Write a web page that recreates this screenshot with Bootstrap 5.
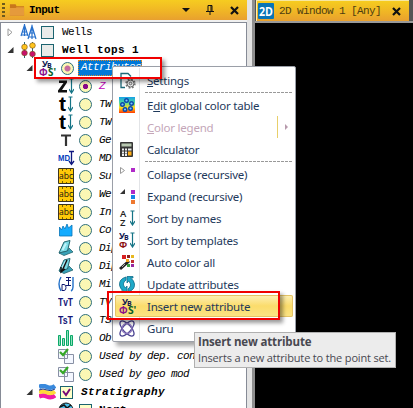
<!DOCTYPE html>
<html lang="en">
<head>
<meta charset="utf-8">
<title>Input</title>
<link rel="stylesheet" href="https://cdn.jsdelivr.net/npm/bootstrap@5.3.0/dist/css/bootstrap.min.css">
<style>
body{width:413px;height:408px;overflow:hidden;background:#f0f0f0;font:12px "Open Sans","Noto Sans",sans-serif}
svg{display:block;flex:none}
.mono{font-family:"Liberation Mono",monospace;font-size:11px;letter-spacing:-.6px;white-space:pre;color:#000}
.mono.fw-bold{letter-spacing:.4px}
.mono.pane-name{letter-spacing:-.5px}
.mono.tab-name{color:#4d3d10;padding-left:1px}
.gold{background:linear-gradient(#f6cc20,#efb326 60%,#e8a02f)}
.left-pane{width:247px}
.pane-title{height:20px;padding-left:2px}
.grip{width:3px;height:15px;background:repeating-linear-gradient(#6d5a1c 0 2px,transparent 2px 4px)}
.tree{margin-top:2px;height:386px;background:#fff;border:1px solid #868b96;border-bottom:0;overflow:hidden}
.tree-row{height:18px}
.lvl-0{padding-left:6px}.lvl-1{padding-left:25px}.lvl-2{padding-left:57px}
.lvl-2 .mono{padding-left:3px}
.exp{width:7px;margin-right:6px}
.chk{width:13px;height:13px;border:1px solid #1c6470;background:#e9ebe9;flex:none}
.chk.on{background:#ffffc8}
.rad{width:13px;height:13px;border:1.300px solid #2e6f7c;border-radius:50%;background:#fbf7b4;flex:none}
.rad.on{background:radial-gradient(circle,#8a0a8a 0 2.300px,#fbf7b4 3px)}
.rad.part{background:radial-gradient(circle,#c56b9d 0 2.500px,#fbf7b4 3.500px)}
.tree .magenta{color:#c000b8}
.tree .sel{background:#0078d7;color:#fff;height:16px;line-height:15px;width:64px;padding-left:3px;outline:1px dotted #d98b28;outline-offset:-1px}
.splitter{width:5px;background:#e4e4e4}
.right-pane{background:#000;border-left:3px solid #8f8f8f;min-width:0}
.tab-strip{height:21px;background:#555;padding-left:1px}
.doc-tab{width:153px;height:21px;border-left:1px solid #fff0b0;border-top:1px solid #f7e7a0}
.tab-edge{height:2px;background:#999}
.ctx{left:112px;top:66px;width:184px;height:276px;background:#fff;border:1px solid #9b9fa8;border-radius:2px;padding:2px 2px 0 2px;box-shadow:4px 4px 4px rgba(0,0,0,.35);color:#1e395b}
.ctx-rule{left:26px;top:1px;bottom:1px;width:1px;background:#e2e4e7}
.ctx-item{height:22px;padding-left:4px;position:relative;font-family:"Noto Sans","Open Sans",sans-serif;font-size:11.500px;letter-spacing:-.220px;white-space:nowrap}
.ctx-item svg{margin-right:11px}
.ctx-sep{height:3px;margin-left:30px;background:repeating-linear-gradient(90deg,#999 0 3px,transparent 3px 4px) 0 1px/100% 1px no-repeat}
.ctx .muted{color:#c4a6b8}
.hot{background:linear-gradient(#fdf0b8,#fbdc6b 50%,#fbe486);box-shadow:inset 0 0 0 1px #e5c365;border-radius:2px}
.sub-line{width:1px;height:22px;background:#e8cf6a;margin-right:6px}
.ctx svg.sub-arrow{margin-right:4px}
.tip{left:194px;top:332px;width:202px;height:36px;background:#ececec;border:1px solid #b0b0b0;color:#484850;padding:1px 0 0 3px;line-height:16px;white-space:nowrap}
.tip-body{font-size:11px;letter-spacing:-.160px}
.tip-head{font-size:11.500px;letter-spacing:-.160px}
.mark-box{border:2px solid #f00000;box-shadow:3px 3px 4px rgba(0,0,0,.4)}
.mark-a{left:34px;top:57px;width:128px;height:22px}
.mark-b{left:107px;top:291px;width:173px;height:29px}
</style>
</head>
<body class="position-relative">
<svg width="0" height="0" class="position-absolute"><defs>
<linearGradient id="rain" x2="0" y2="1"><stop stop-color="#16a0e8"/><stop offset=".35" stop-color="#50d8a0"/><stop offset=".65" stop-color="#ffe020"/><stop offset="1" stop-color="#ff3800"/></linearGradient>
<symbol id="attr" viewBox="0 0 18 17"><g font-family="Open Sans" font-weight="700"><text x="3" y="7" font-size="9" fill="#101850">У</text><text x="8" y="8" font-size="7" fill="#101850">В</text><text x="0" y="16" font-size="10" fill="#8a108a">Ф</text><text x="9" y="16" font-size="11" fill="#086028" textLength="8" lengthAdjust="spacingAndGlyphs">S'</text></g></symbol>
<symbol id="open" viewBox="0 0 7 7"><path d="M6.500 0v6H.5z" fill="#333"/></symbol>
<symbol id="shut" viewBox="0 0 7 9"><path d="M1 .8v7l4-3.500z" fill="#fff" stroke="#999"/></symbol>
<symbol id="down" viewBox="0 0 5 16"><path d="M2.500 1v13M.5 1h4M0 11l2.500 4L5 11" fill="none" stroke="#157486" stroke-width="1.200"/></symbol>
<symbol id="abc" viewBox="0 0 16 16"><path d="M.5.5h15v15H.5z" fill="#ffca08" stroke="#3b3520"/><path d="M4.500 1v2m4-2v1m4-1v2M4.500 13v2m4-1v1m4-2v2" stroke="#7a6200"/><text x="1" y="11" font-family="Open Sans" font-size="9" textLength="14" lengthAdjust="spacingAndGlyphs" fill="#111">abc</text></symbol>
<symbol id="plane" viewBox="0 0 16 16"><path d="M6 2l6-1.500L9.500 11 1 13z" fill="#7adbe6" stroke="#25666f"/><path d="M1 13l8.500-2 1.500-3 4 4-9 3.500z" fill="#3aa3b8" stroke="#25666f" stroke-width=".8"/><path d="M8 3.500L4.500 10" stroke="#c4f4fa" stroke-width="2"/></symbol>
<symbol id="used" viewBox="0 0 16 16"><path d="M.5 1.500h9v9h-9zM6.500 6.500h9v9h-9z" fill="#f4f7ff" stroke="#8890a4"/><path d="M2 4l3 3 5-6" fill="none" stroke="#35a828" stroke-width="2.200"/></symbol>
<symbol id="x" viewBox="0 0 9 9"><path d="M1 1l7 7M8 1L1 8" stroke="#111" stroke-width="2.200"/></symbol>
</defs></svg>

<main class="d-flex vh-100">
<section class="left-pane flex-shrink-0">
 <header class="pane-title gold d-flex align-items-center">
  <span class="grip me-1"></span>
  <svg width="16" height="14" viewBox="0 0 17 14"><path d="M1 1h6l1 2h8v10H1z" fill="#c8761c"/><path d="M1 5h6l1-1h8v9H1z" fill="#e59a3c"/></svg>
  <span class="mono fw-bold pane-name flex-grow-1 ps-1">Input</span>
  <svg width="8" height="5"><path d="M0 0h8L4 4z" fill="#111"/></svg>
  <svg class="ms-3 me-3" width="8" height="10" viewBox="0 0 8 10"><path d="M2 6V.5h4V6M0 6.500h8M4 7v3M5 1v5" fill="none" stroke="#111"/></svg>
  <svg class="me-2" width="9" height="9"><use href="#x"/></svg>
 </header>
 <div class="tree">
  <div class="tree-row lvl-0 d-flex align-items-center"><svg class="exp" height="9"><use href="#shut"/></svg>
   <svg width="17" height="16" viewBox="0 0 17 16" fill="none" stroke="#2670cc" stroke-width="1.200"><path d="M4.500 0v12M1 12L4.500 1 8 12M2.500 8h4M1 11h7"/><path d="M12 1v14M8 15l4-13 4 13M10 9h4M8.500 13h7"/></svg>
   <span class="chk ms-1 me-1"></span><span class="mono ps-1 ms-n1">Wells</span></div>
  <div class="tree-row lvl-0 d-flex align-items-center"><svg class="exp" height="7"><use href="#open"/></svg>
   <svg width="17" height="16" viewBox="0 0 17 16"><path d="M4.500 0v16M12.500 0v16" stroke="#2a6a74"/><g stroke="#775010" stroke-width=".6"><circle cx="4.500" cy="5" r="2.800" fill="#ffc41e"/><circle cx="12.500" cy="3.500" r="2.800" fill="#ffc41e"/><circle cx="4.500" cy="11" r="2.800" fill="#c8106c"/><circle cx="12.500" cy="12" r="2.800" fill="#c8106c"/></g></svg>
   <span class="chk mx-1"></span><span class="mono fw-bold ps-1">Well tops 1</span></div>
  <div class="tree-row lvl-1 d-flex align-items-center"><svg class="exp" height="7"><use href="#open"/></svg>
   <svg width="18" height="17"><use href="#attr"/></svg>
   <span class="rad part mx-1"></span><span class="mono fst-italic sel">Attributes</span></div>
  <div class="tree-row lvl-2 d-flex align-items-center"><svg width="17" height="17"><path d="M1 2.500h8v2L4 12h5v2.500H0v-2L5.500 5H1z" fill="#111"/><use href="#down" x="11" width="5" height="16"/></svg><span class="rad on mx-1"></span><span class="mono fst-italic magenta">Z</span></div>
  <div class="tree-row lvl-2 d-flex align-items-center"><svg width="17" height="18"><text x="1" y="16" font-family="Liberation Sans" font-weight="700" font-size="21">t</text><use href="#down" x="10" y="1" width="5" height="16"/></svg><span class="rad mx-1"></span><span class="mono fst-italic">TWT</span></div>
  <div class="tree-row lvl-2 d-flex align-items-center"><svg width="17" height="18"><text x="1" y="16" font-family="Liberation Sans" font-weight="700" font-size="21">t</text><use href="#down" x="10" y="1" width="5" height="16"/></svg><span class="rad mx-1"></span><span class="mono fst-italic">TWT</span></div>
  <div class="tree-row lvl-2 d-flex align-items-center"><svg width="17" height="16"><path d="M3 3.500h10M8 3v11" stroke="#333" stroke-width="2.200"/></svg><span class="rad mx-1"></span><span class="mono fst-italic">Ge</span></div>
  <div class="tree-row lvl-2 d-flex align-items-center"><svg width="17" height="16"><text x="0" y="11" font-family="Liberation Sans" font-weight="700" font-size="9" textLength="12" lengthAdjust="spacingAndGlyphs" fill="#0640bd">MD</text><path d="M11 1.500h5M13.500 1v13M11 11l2.500 3.500L16 11" fill="none" stroke="#101880" stroke-width="1.300"/></svg><span class="rad mx-1"></span><span class="mono fst-italic">MD</span></div>
  <div class="tree-row lvl-2 d-flex align-items-center"><svg width="17" height="16"><use href="#abc" width="16"/></svg><span class="rad mx-1"></span><span class="mono fst-italic">Su</span></div>
  <div class="tree-row lvl-2 d-flex align-items-center"><svg width="17" height="16"><use href="#abc" width="16"/></svg><span class="rad mx-1"></span><span class="mono fst-italic">We</span></div>
  <div class="tree-row lvl-2 d-flex align-items-center"><svg width="17" height="16"><use href="#abc" width="16"/></svg><span class="rad mx-1"></span><span class="mono fst-italic">In</span></div>
  <div class="tree-row lvl-2 d-flex align-items-center"><svg width="17" height="16"><path d="M1.500 14V5l2 3L5 4l2 3 2-5 1.500 4L14 3v11z" fill="#14acff" stroke="#0874b8" stroke-width=".8"/></svg><span class="rad mx-1"></span><span class="mono fst-italic">Co</span></div>
  <div class="tree-row lvl-2 d-flex align-items-center"><svg width="17" height="16"><use href="#plane" width="16"/></svg><span class="rad mx-1"></span><span class="mono fst-italic">Dip</span></div>
  <div class="tree-row lvl-2 d-flex align-items-center"><svg width="17" height="16"><use href="#plane" width="16"/><path d="M9 2L4 13M3 9v5l4-3" fill="none" stroke="#111" stroke-width="1.500"/></svg><span class="rad mx-1"></span><span class="mono fst-italic">Dip</span></div>
  <div class="tree-row lvl-2 d-flex align-items-center"><svg width="17" height="16"><path d="M3 1Q-1 8 3 15M15 1v10q0 3-2 4" fill="none" stroke="#2270c8" stroke-width="1.400"/><path d="M8 1.500h5M8 4.500h5M8 9.500h5M10.500 1v9" stroke="#101870"/><path d="M4 8.500h2q2 0 2 3t-2 3H4z" fill="none" stroke="#101870"/></svg><span class="rad mx-1"></span><span class="mono fst-italic">Mi</span></div>
  <div class="tree-row lvl-2 d-flex align-items-center"><svg width="17" height="16"><text x="0" y="12" font-family="Liberation Sans" font-weight="700" font-size="11" textLength="15" lengthAdjust="spacingAndGlyphs" fill="#161878">TvT</text></svg><span class="rad mx-1"></span><span class="mono fst-italic">TVT</span></div>
  <div class="tree-row lvl-2 d-flex align-items-center"><svg width="17" height="16"><text x="0" y="12" font-family="Liberation Sans" font-weight="700" font-size="11" textLength="15" lengthAdjust="spacingAndGlyphs" fill="#161878">TsT</text></svg><span class="rad mx-1"></span><span class="mono fst-italic">TST</span></div>
  <div class="tree-row lvl-2 d-flex align-items-center"><svg width="17" height="16"><path d="M.5 5.500h2v10h-2zM4.500 8.500h2v7h-2zM8.500.5h2v15h-2zM12.500 5.500h2v10h-2z" fill="#8ee0bc" stroke="#0ba868"/></svg><span class="rad mx-1"></span><span class="mono fst-italic">Ob</span></div>
  <div class="tree-row lvl-2 d-flex align-items-center"><svg width="17" height="16"><use href="#used" width="16"/></svg><span class="rad mx-1"></span><span class="mono fst-italic">Used by dep. conv</span></div>
  <div class="tree-row lvl-2 d-flex align-items-center"><svg width="17" height="16"><use href="#used" width="16"/></svg><span class="rad mx-1"></span><span class="mono fst-italic">Used by geo mod</span></div>
  <div class="tree-row lvl-1 d-flex align-items-center"><svg class="exp" height="7"><use href="#open"/></svg>
   <svg width="17" height="16" fill="none" stroke-width="4.500"><path d="M0 3q4-2 8 0t8-1" stroke="#3989dc"/><path d="M0 12.500q4-2 8 0t8-1" stroke="#f01ba8"/><path d="M0 8.500q4-2 8 0t8-1" stroke="#ffd83a" stroke-width="4"/><path d="M0 6q4-2 8 0t8-1" stroke="#263880" stroke-width="1"/></svg>
   <span class="chk on mx-1"><svg width="11" height="11"><path d="M2 4l3 4 4-6" fill="none" stroke="#780a78" stroke-width="2"/></svg></span><span class="mono fw-bold fst-italic ps-1">Stratigraphy</span></div>
  <div class="tree-row lvl-2 d-flex align-items-center"><svg width="17" height="16"><circle cx="8" cy="8" r="7" fill="#4ac0ea" stroke="#111"/><path d="M2 5l4-2 3 3 4-3M4 10l4-4" stroke="#111" fill="none" stroke-width="1.500"/></svg><span class="chk on mx-1"></span><span class="mono fw-bold">Nort</span></div>
 </div>
</section>
<div class="splitter flex-shrink-0"></div>
<section class="right-pane flex-grow-1">
 <div class="tab-strip"><div class="doc-tab gold d-flex align-items-center">
  <svg class="ms-0 me-1" width="17" height="16"><rect x="1" width="16" height="16" rx="1" fill="#0875b8"/><text x="2" y="12.500" fill="#fff" font-family="Open Sans" font-size="12" font-weight="700" textLength="14" lengthAdjust="spacingAndGlyphs">2D</text></svg>
  <span class="mono flex-grow-1 tab-name">2D window 1 [Any]</span><svg class="me-2" width="9" height="9"><use href="#x"/></svg></div></div>
 <div class="tab-edge"></div>
</section>
</main>

<div class="ctx position-absolute">
 <div class="ctx-rule position-absolute"></div>
 <div class="ctx-item d-flex align-items-center"><svg width="17" height="17" fill="none"><path d="M6 15.500H2v-14h7l3 3" stroke="#1d6878" stroke-width="1.300"/><circle cx="11.500" cy="11.500" r="4.200" stroke="#777" stroke-width="2" stroke-dasharray="1.700 1.600"/><circle cx="11.500" cy="11.500" r="3.500" stroke="#666" fill="#eee"/><circle cx="11.500" cy="11.500" r="1.300" stroke="#666"/></svg><span><u>S</u>ettings</span></div>
 <div class="ctx-sep"></div>
 <div class="ctx-item d-flex align-items-center"><svg width="17" height="17"><rect width="16" height="16" fill="url(#rain)"/><g fill="#7cc4ff" stroke="#0a48a8" stroke-width="1.400"><circle cx="7.500" cy="3.500" r="1.800"/><circle cx="3.500" cy="7.500" r="1.800"/><circle cx="12.500" cy="6.500" r="1.800"/><circle cx="6" cy="12.500" r="1.800"/><circle cx="11.500" cy="11.500" r="1.800"/></g></svg><span>E<u>d</u>it global color table</span></div>
 <div class="ctx-item muted d-flex align-items-center"><svg width="17" height="17"></svg><span class="flex-grow-1"><u>C</u>olor legend</span><span class="sub-line"></span><svg class="sub-arrow" width="5" height="7"><path d="M1 0l3 3-3 3z" fill="#b79aac"/></svg></div>
 <div class="ctx-item d-flex align-items-center"><svg width="17" height="17"><rect x="1" y="1" width="13" height="15" rx="1" fill="#363636"/><path d="M2.500 2.500h10v3h-10z" fill="#b8c8b0"/><path d="M3 8.500h5M3 11.500h5M3 14h5" stroke="#eee" stroke-width="2" stroke-dasharray="2 1"/><path d="M9 7.500h3.500v2H9z" fill="#eee"/><path d="M9 10.500h3.500v4H9z" fill="#ffac14"/></svg><span>Calculator</span></div>
 <div class="ctx-sep"></div>
 <div class="ctx-item d-flex align-items-center"><svg width="17" height="17"><path d="M1.500 1.500v6l4-3z" fill="#fff" stroke="#999"/><path d="M12 2h4v4h-4z" fill="#b02ac8"/></svg><span>Collapse (recursive)</span></div>
 <div class="ctx-item d-flex align-items-center"><svg width="17" height="17"><path d="M6 1v5H1z" fill="#333"/><path d="M12 2h4v4h-4z" fill="#b02ac8"/><path d="M12 7h4v4h-4z" fill="#1684e8"/><path d="M12 12h4v4h-4z" fill="#ee7830"/></svg><span>Expand (recursive)</span></div>
 <div class="ctx-item d-flex align-items-center"><svg width="17" height="18"><g font-family="Open Sans" font-weight="600" font-size="9.500" fill="#222"><text x="1" y="8">A</text><text x="1" y="17">Z</text></g><use href="#down" x="11" y="1" width="5" height="16"/></svg><span>Sort by names</span></div>
 <div class="ctx-item d-flex align-items-center"><svg width="17" height="18"><g font-family="Open Sans" font-weight="700" fill="#101850"><text x="0" y="8" font-size="9">У</text><text x="5" y="9" font-size="7">В</text><text x="0" y="17" font-size="9.500" fill="#8c1010">Ф</text></g><use href="#down" x="11" y="1" width="5" height="16"/></svg><span>Sort by templates</span></div>
 <div class="ctx-item d-flex align-items-center"><svg width="17" height="17"><path d="M1 15L10 7" stroke="#222" stroke-width="3"/><path d="M3 13l3-3" stroke="#aaa"/><path d="M7 5h3v3H7z" fill="#f0a018"/><path d="M3 1h4v4H3z" fill="#d82020"/><path d="M8 1h3v3H8z" fill="#902020"/><path d="M12 1h3v3h-3z" fill="#e8b820"/><path d="M12 6h3v3h-3z" fill="#c03030"/><path d="M8 10h3v3H8z" fill="#38a040"/><path d="M12 10h3v3h-3z" fill="#9828a0"/></svg><span>Auto color all</span></div>
 <div class="ctx-item d-flex align-items-center"><svg width="17" height="17"><path d="M7 1Q0 3 .5 9q.5 4 4 6H2v1.500h6V10L6.500 12Q2 8 7 4zM9 16q7-2 6.500-8-.5-4-4-6H14V.5H8V7l1.500-2Q14 9 9 13z" fill="#1fa9c8" stroke="#0f6d8c" stroke-width=".8"/></svg><span>Update attributes</span></div>
 <div class="ctx-item hot d-flex align-items-center"><svg width="17" height="17"><use href="#attr" width="18" height="17"/></svg><span>Insert new attribute</span></div>
 <div class="ctx-item d-flex align-items-center"><svg width="17" height="17" fill="none" stroke="#474090" stroke-width="1.300"><ellipse cx="8" cy="8.500" rx="9.500" ry="4" transform="rotate(48 8 8.500)"/><ellipse cx="8" cy="8.500" rx="9.500" ry="4" transform="rotate(-48 8 8.500)"/><circle cx="8" cy="8.500" r="5" stroke="#8b76bb"/></svg><span>Guru</span></div>
</div>
<div class="mark-box mark-a position-absolute"></div>
<div class="mark-box mark-b position-absolute"></div>
<div class="tip position-absolute"><div class="fw-bold tip-head">Insert new attribute</div><div class="tip-body">Inserts a new attribute to the point set.</div></div>
<script src="https://cdn.jsdelivr.net/npm/bootstrap@5.3.0/dist/js/bootstrap.bundle.min.js"></script>
</body>
</html>
